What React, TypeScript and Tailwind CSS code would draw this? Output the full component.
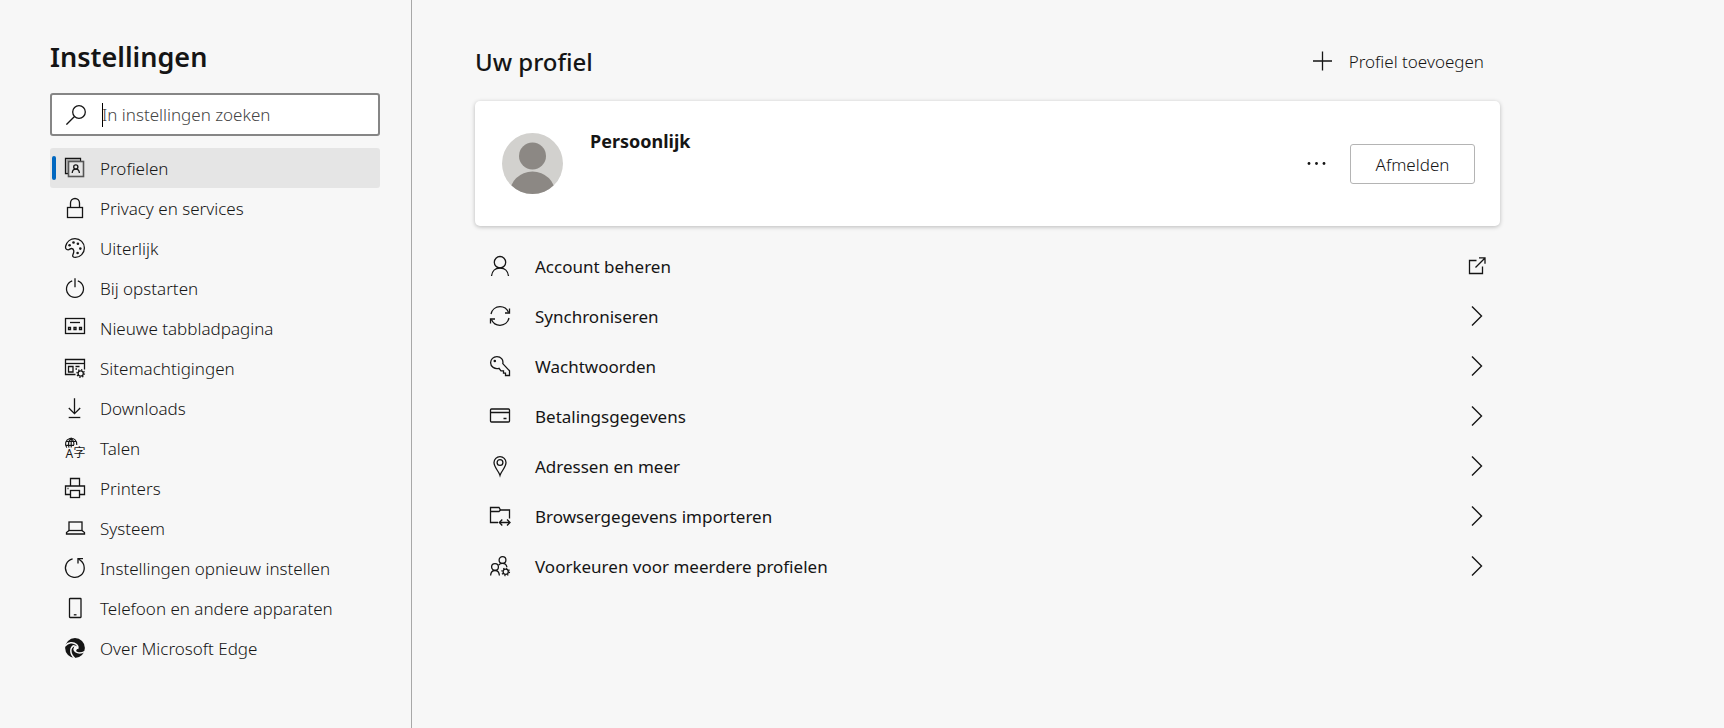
import type { ReactNode } from "react";

type IconProps = { children: ReactNode };

function Icon({ children }: IconProps) {
  return (
    <svg
      viewBox="0 0 20 20"
      className="size-5 shrink-0 overflow-visible"
      fill="none"
      stroke="currentColor"
      strokeWidth="1.3"
      aria-hidden
    >
      {children}
    </svg>
  );
}

/** Small cog used as a badge in the corner of other icons. */
function Cog({ x, y }: { x: number; y: number }) {
  return (
    <g>
      <circle cx={x} cy={y} r="2.6" />
      <circle cx={x} cy={y} r="3.7" strokeWidth="1.4" strokeDasharray="1.2 1.7" />
    </g>
  );
}

const navItems: { label: string; icon: ReactNode }[] = [
  {
    label: "Profielen",
    icon: (
      <>
        <path d="M3.5 15.5h-3V.5h15v3" />
        <path d="M2 15V2h13" stroke="#a0a0a0" />
        <rect x="3.5" y="3.5" width="15" height="15" stroke="#555" strokeWidth="1.6" />
        <circle cx="10.8" cy="9" r="2.1" />
        <path d="M7.2 15c.2-2.4 1.5-3.9 3.6-3.9s3.4 1.5 3.6 3.9" />
      </>
    ),
  },
  {
    label: "Privacy en services",
    icon: (
      <>
        <rect x="2.5" y="9.5" width="15" height="10" />
        <path d="M5.5 9.5V5a4.5 4.5 0 0 1 9 0v4.5" />
      </>
    ),
  },
  {
    label: "Uiterlijk",
    icon: (
      <>
        <path d="M.7 8C1.8 3.6 5.6.6 10 .6c5.2 0 9.4 4.2 9.4 9.4s-4.2 9.4-9 9.4c-2.4 0-3.2-1.2-2.4-2.9 1.3-2.8 1.1-5.7-1.3-6-1.7-.2-2 1.3-3.6 1.3C1 11.8.2 10.2.7 8z" />
        <g fill="currentColor" stroke="none">
          <circle cx="4.6" cy="7.3" r="1.3" />
          <circle cx="8.5" cy="4.5" r="1.3" />
          <circle cx="12.9" cy="5.8" r="1.3" />
          <circle cx="15.3" cy="10.6" r="1.3" />
          <circle cx="12.6" cy="15" r="1.3" />
        </g>
      </>
    ),
  },
  {
    label: "Bij opstarten",
    icon: (
      <>
        <path d="M7.2 2.9a8.5 8.5 0 1 0 5.6 0" />
        <path d="M10 .2v9" />
      </>
    ),
  },
  {
    label: "Nieuwe tabbladpagina",
    icon: (
      <>
        <rect x=".5" y=".5" width="19" height="15" />
        <path d="M5 4.5h10" />
        <path d="M3.5 9.5h2v2h-2zM9 9.5h2v2H9zM14.5 9.5h2v2h-2z" />
      </>
    ),
  },
  {
    label: "Sitemachtigingen",
    icon: (
      <>
        <path d="M10.5 16.5H.5v-15h19v10" />
        <path d="M.5 5.5h19" />
        <path d="M3.5 8.5H8V14H3.5zM10.5 8.5h4M10.5 11H12" />
        <Cog x={15.7} y={15.5} />
      </>
    ),
  },
  {
    label: "Downloads",
    icon: (
      <>
        <path d="M9.5.2v15.5M3.8 10l5.7 5.7 5.7-5.7" />
        <path d="M3.7 19.5h11.6" />
      </>
    ),
  },
  {
    label: "Talen",
    icon: (
      <>
        <path d="M1.8 9.6A5.7 5.7 0 1 1 11.8 7M.8 3.5h10.8M.6 7.4H9" strokeWidth="1.1" />
        <path d="M4 9.6C3 6 3.500 2.500 6.200.3 8.600 2.500 9.200 4.500 8.800 7M6.200.3v9.300" strokeWidth="1.1" />
        <g fill="currentColor" stroke="none">
          <text x=".5" y="20" className="font-['Noto_Sans',sans-serif] text-[12px]">A</text>
          <text x="8.500" y="18.500" className="font-['Noto_Sans_CJK_SC',sans-serif] text-[12px]">字</text>
        </g>
      </>
    ),
  },
  {
    label: "Printers",
    icon: (
      <>
        <path d="M5.5 8V.5h9V8" />
        <path d="M5.5 16.5h-5V8h19v8.500h-5" />
        <rect x="5.5" y="12.5" width="9" height="7" />
        <path d="M2.5 10.5h1" />
      </>
    ),
  },
  {
    label: "Systeem",
    icon: (
      <>
        <rect x="4" y="4" width="13" height="8.5" />
        <path d="M4 12.5l-2.5 2V16h18v-1.5l-2.5-2" />
      </>
    ),
  },
  {
    label: "Instellingen opnieuw instellen",
    icon: (
      <>
        <path d="M7.6.9a9.4 9.4 0 1 0 8 1.7L13.500.9" />
        <path d="M18 .6h-5v5" />
      </>
    ),
  },
  {
    label: "Telefoon en andere apparaten",
    icon: (
      <>
        <rect x="4.5" y=".5" width="11.5" height="19" rx=".5" />
        <path d="M8.8 16.8h2.7" />
      </>
    ),
  },
  {
    label: "Over Microsoft Edge",
    icon: (
      <>
        <circle cx="10" cy="10" r="9.9" fill="currentColor" stroke="none" />
        <g stroke="#f7f7f7" strokeWidth="1.5">
          <path d="M0 8C3 4.500 8 3.600 11.500 6.500c1.500 1.300 1.700 3 1 4.500" />
          <path d="M9.500 7.500C4.500 9 4.500 16 10 20.500" />
          <path d="M9 10.500c.2 4 5.500 6 11 2.800" />
        </g>
        <path
          d="M9.300 7.600c2.400-.3 3.800 1.700 3 3.200-.7 1.200-1.600 2-.8 3-1.800-.5-2.700-1.600-2.700-3.200 0-1.200.5-1.900.5-3z"
          fill="#f7f7f7"
          stroke="none"
        />
      </>
    ),
  },
];

const profileLinks: { label: string; icon: ReactNode; external?: boolean }[] = [
  {
    label: "Account beheren",
    external: true,
    icon: (
      <>
        <circle cx="10" cy="6.2" r="5.7" />
        <path d="M1.5 20c.4-4.8 3.8-8 8.500-8s8.100 3.200 8.500 8" />
      </>
    ),
  },
  {
    label: "Synchroniseren",
    icon: (
      <>
        <path d="M1 8C2 3.500 5.700.7 10 .7c3.800 0 7 2.200 8.600 5.800" />
        <path d="M19.500 2.500V7H15" />
        <path d="M19 12c-1 4.500-4.700 7.300-9 7.300-3.800 0-7-2.200-8.600-5.800" />
        <path d="M.5 17.500V13H5" />
      </>
    ),
  },
  {
    label: "Wachtwoorden",
    icon: (
      <>
        <path d="M12.800 7.600l6.700 7.200v4.700h-4v-2.300h-2v-2.300H11l-2-2.600C4.500 13.500.6 10.500.6 6.800.6 3.300 3.400.6 6.900.6c4 0 6.700 3.200 5.900 7z" />
        <circle cx="4.8" cy="5" r="1.3" fill="currentColor" stroke="none" />
      </>
    ),
  },
  {
    label: "Betalingsgegevens",
    icon: (
      <>
        <rect x=".5" y="3" width="19" height="13" rx="1" />
        <path d="M.5 6.500h19M13.500 12.500h3" />
      </>
    ),
  },
  {
    label: "Adressen en meer",
    icon: (
      <>
        <path d="M10 19.300C9 15.500 4 11.500 4 6.600a6 6 0 0 1 12 0c0 4.900-5 8.900-6 12.700z" />
        <circle cx="10" cy="6.5" r="2.9" />
      </>
    ),
  },
  {
    label: "Browsergegevens importeren",
    icon: (
      <>
        <path d="M8 16.500H.5v-15H9L10.500 4h9v8.500" />
        <path d="M.5 5.500H9L10.500 4" />
        <path d="M9.500 16.500h10.300M12.300 13.500l-3 3 3 3M17 13.500l3 3-3 3" />
      </>
    ),
  },
  {
    label: "Voorkeuren voor meerdere profielen",
    icon: (
      <>
        <circle cx="12.5" cy="4" r="3.4" />
        <circle cx="5" cy="11" r="3.4" />
        <path d="M.6 19.500c.2-3 2-5 4.400-5s4.200 2 4.400 5" />
        <path d="M8.700 9c.8-1.100 2.200-1.700 3.800-1.700 2.300 0 4 1.500 4.400 3.700" />
        <Cog x={15.7} y={15.8} />
      </>
    ),
  },
];

function Sidebar() {
  return (
    <aside className="w-[412px] shrink-0 border-r border-[#a8a8a8] pt-[37px] pr-[31px] pl-[50px]">
      <h1 className="text-[27px] leading-10 font-semibold">Instellingen</h1>
      <label className="relative mt-4 flex h-[43px] items-center rounded-[3px] border-2 border-[#868686] bg-white">
        <svg
          viewBox="0 0 20 20"
          className="ml-3.5 size-5 shrink-0"
          fill="none"
          stroke="currentColor"
          strokeWidth="1.3"
          aria-hidden
        >
          <circle cx="13" cy="7" r="6.3" />
          <path d="M8.500 11.500L.4 19.600" />
        </svg>
        <input
          type="text"
          aria-label="In instellingen zoeken"
          placeholder="In instellingen zoeken"
          className="ml-4 min-w-0 flex-1 bg-transparent text-[17px] font-light caret-transparent outline-none placeholder:text-[#444]"
        />
        <span className="absolute left-[50px] h-6 w-px bg-black" />
      </label>
      <nav className="mt-3">
        {navItems.map(({ label, icon }, i) => (
          <a
            key={label}
            href="#"
            className={
              i === 0
                ? "relative flex h-10 items-center gap-[15px] rounded-[3px] bg-[#e5e5e5] pl-[15px]"
                : "flex h-10 items-center gap-[15px] pl-[15px]"
            }
          >
            {i === 0 && (
              <span className="absolute top-2 bottom-2 left-0.5 w-1 rounded-sm bg-[#0067c0]" />
            )}
            <Icon>{icon}</Icon>
            <span className="pt-0.5 text-[17px] font-light">{label}</span>
          </a>
        ))}
      </nav>
    </aside>
  );
}

function Avatar() {
  return (
    <svg viewBox="0 0 61 61" className="size-[61px] shrink-0" aria-hidden>
      <defs>
        <clipPath id="avatar">
          <circle cx="30.5" cy="30.5" r="30.5" />
        </clipPath>
      </defs>
      <g clipPath="url(#avatar)">
        <rect width="61" height="61" fill="#d2d1ce" />
        <circle cx="30.5" cy="23" r="13.5" fill="#8c8884" />
        <ellipse cx="30.5" cy="61" rx="23" ry="22.5" fill="#8c8884" />
      </g>
    </svg>
  );
}

export default function App() {
  return (
    <div className="flex min-h-screen bg-[#f7f7f7] font-['Noto_Sans','Open_Sans',sans-serif] text-[#151515]">
      <Sidebar />
      <main className="min-w-0 flex-1 px-[63px] pt-10">
        <div className="max-w-[1025px]">
          <header className="flex h-11 items-center justify-between pr-4">
            <h2 className="text-[24px] font-medium">Uw profiel</h2>
            <button type="button" className="flex items-center gap-4 text-[17px] font-light">
              <Icon>
                <path d="M9.500-.500v19M0 9h19" />
              </Icon>
              Profiel toevoegen
            </button>
          </header>

          <section className="mt-[17px] flex h-[125px] items-center rounded-[5px] bg-white pr-[25px] pl-[27px] shadow-[0_1px_4px_rgba(0,0,0,0.25)]">
            <Avatar />
            <h3 className="ml-[27px] self-start pt-7 text-[18px] leading-6 font-bold">
              Persoonlijk
            </h3>
            <button type="button" aria-label="Meer acties" className="ml-auto p-2">
              <svg viewBox="0 0 20 4" className="h-1 w-5" fill="currentColor" aria-hidden>
                <circle cx="3" cy="1.5" r="1.4" />
                <circle cx="10.5" cy="1.5" r="1.4" />
                <circle cx="18" cy="1.5" r="1.4" />
              </svg>
            </button>
            <button
              type="button"
              className="ml-4 h-10 w-[125px] rounded-[3px] border border-[#b4b4b4] pt-0.5 text-[17px] font-light"
            >
              Afmelden
            </button>
          </section>

          <ul className="mt-[15px]">
            {profileLinks.map(({ label, icon, external }) => (
              <li key={label}>
                <a href="#" className="flex h-[50px] items-center pr-[13px] pl-[15px]">
                  <Icon>{icon}</Icon>
                  <span className="ml-[25px] pt-0.5 text-[17px]">{label}</span>
                  <span className="ml-auto">
                    <Icon>
                      {external ? (
                        <path d="M9.500 4.500h-7v13h13v-7M8.500 11.500l9.300-9.300M12 1.800h6v6" />
                      ) : (
                        <path d="M5 .5l9.500 9.500L5 19.500" strokeWidth="1.4" />
                      )}
                    </Icon>
                  </span>
                </a>
              </li>
            ))}
          </ul>
        </div>
      </main>
    </div>
  );
}
